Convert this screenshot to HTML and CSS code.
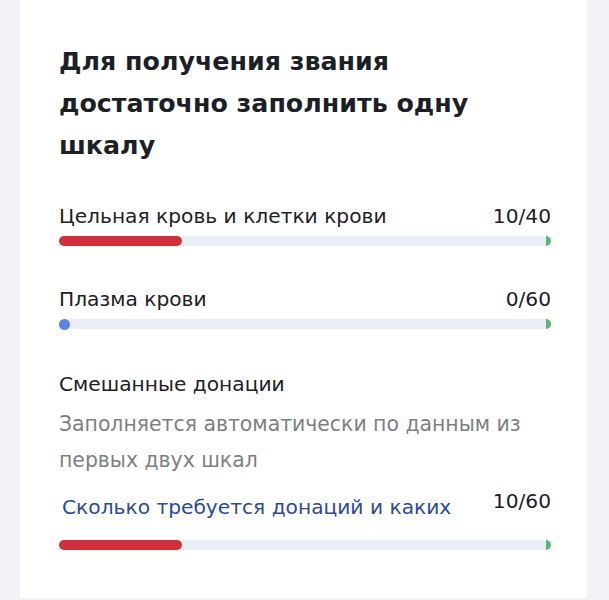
FILE: index.html
```html
<!DOCTYPE html>
<html lang="ru">
<head>
<meta charset="utf-8">
<link rel="stylesheet" href="styles.css">
</head>
<body>
<div class="card">
  <h2 class="title">Для получения звания достаточно заполнить одну шкалу</h2>

  <div class="scale scale-first">
    <div class="row"><span class="label">Цельная кровь и клетки крови</span><span class="value">10/40</span></div>
    <div class="track"><div class="fill red" style="width:25%"></div><span class="cap"></span></div>
  </div>

  <div class="scale scale-second">
    <div class="row"><span class="label">Плазма крови</span><span class="value">0/60</span></div>
    <div class="track"><div class="dot"></div><span class="cap"></span></div>
  </div>

  <div class="mixed">
    <div class="label">Смешанные донации</div>
    <p class="note">Заполняется автоматически по данным из первых двух шкал</p>
    <div class="row link-row"><a class="link" href="#">Сколько требуется донаций и каких</a><span class="value">10/60</span></div>
    <div class="track"><div class="fill red" style="width:25%"></div><span class="cap"></span></div>
  </div>
</div>
</body>
</html>
```
FILE: styles.css
```css
html, body {
  margin: 0;
  padding: 0;
}
body {
  background: #f1f3f9;
  font-family: "DejaVu Sans", "Liberation Sans", Arial, sans-serif;
  color: #1d2129;
  height: 600px;
  overflow: hidden;
}
.card {
  background: #ffffff;
  margin: 0 22px 0 20px;
  padding: 41px 36px 48px 39px;
}
.title {
  margin: 0;
  font-size: 25.3px;
  line-height: 42px;
  font-weight: 700;
  color: #1b1f27;
  width: 440px;
}
.row {
  display: flex;
  justify-content: space-between;
  align-items: center;
}
.label {
  font-size: 20.2px;
  line-height: 24px;
  color: #1d2025;
}
.value {
  font-size: 20.2px;
  line-height: 24px;
  color: #1d2025;
}
.scale-first {
  margin-top: 37px;
}
.scale-second {
  margin-top: 41px;
}
.track {
  position: relative;
  height: 10px;
  margin-top: 8px;
  background: #ebeef7;
  border-radius: 5px;
}
.fill {
  height: 10px;
  border-radius: 5px;
}
.red {
  background: #d32f3b;
}
.dot {
  width: 11px;
  height: 11px;
  border-radius: 50%;
  background: #5a84ea;
  position: relative;
  top: -0.5px;
}
.cap {
  position: absolute;
  right: 0;
  top: 0;
  width: 5px;
  height: 10px;
  background: #5cb86e;
  border-radius: 0 5px 5px 0;
}
.mixed {
  margin-top: 43px;
}
.note {
  margin: 10px 0 0;
  font-size: 20.4px;
  line-height: 36px;
  color: #7c7f85;
}
.link-row {
  margin-top: 11px;
  align-items: flex-start;
}
.link {
  font-size: 20.2px;
  line-height: 24px;
  color: #2a48a8;
  text-decoration: none;
  margin-left: 3px;
  padding-top: 6px;
}
.mixed .track {
  margin-top: 21px;
}
```
